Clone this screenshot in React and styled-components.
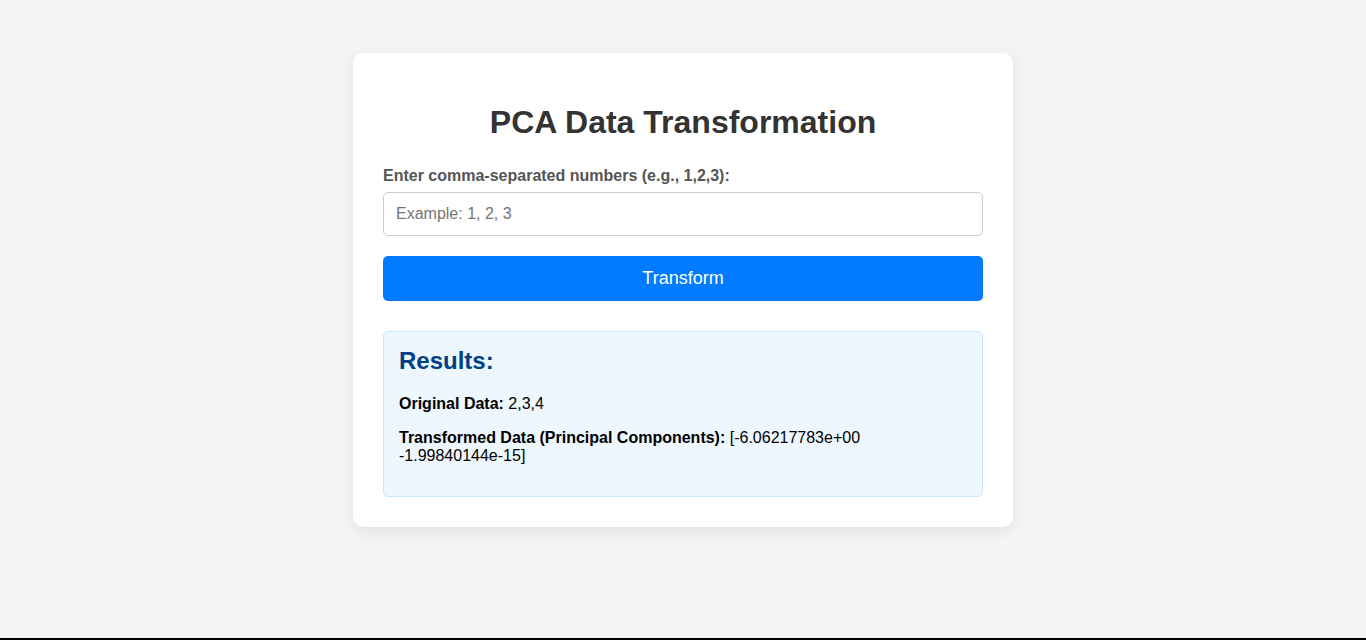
import React from 'react';
import styled, { createGlobalStyle } from 'styled-components';

const GlobalStyle = createGlobalStyle`
  body {
    margin: 0;
    font-family: "Liberation Sans", Arial, sans-serif;
    background: #f3f4f6;
  }
`;

const Page = styled.div`
  min-height: 640px;
  box-sizing: border-box;
  border-bottom: 2px solid #000;
  display: flex;
  justify-content: center;
  align-items: flex-start;
  padding-top: 53px;
`;

const Card = styled.div`
  width: 600px;
  padding: 30px;
  background: #fff;
  border-radius: 10px;
  box-shadow: 0 4px 14px rgba(0, 0, 0, 0.08);
`;

const Title = styled.h1`
  margin: 21px 0 26px;
  font-size: 32px;
  font-weight: bold;
  color: #333;
  text-align: center;
`;

const Label = styled.label`
  display: block;
  margin-bottom: 7px;
  font-size: 16px;
  font-weight: bold;
  color: #555;
`;

const Input = styled.input`
  display: block;
  width: 100%;
  box-sizing: border-box;
  padding: 12px;
  font-family: inherit;
  font-size: 16px;
  border: 1px solid #ccc;
  border-radius: 5px;
  outline: none;

  &::placeholder {
    color: #757575;
  }
`;

const Button = styled.button`
  display: block;
  width: 100%;
  margin-top: 20px;
  padding: 12px;
  font-family: inherit;
  font-size: 18px;
  color: #fff;
  background: #007bff;
  border: none;
  border-radius: 5px;
  cursor: pointer;
`;

const Results = styled.div`
  margin-top: 30px;
  padding: 15px;
  background: #eff7fe;
  border: 1px solid #cce5ff;
  border-radius: 5px;
`;

const ResultsTitle = styled.h2`
  margin: 0 0 20px;
  font-size: 24px;
  font-weight: bold;
  color: #004085;
`;

const Line = styled.p`
  margin: 16px 0;
  font-size: 16px;
  color: #000;
`;

const App = () => (
  <>
    <GlobalStyle />
    <Page>
      <Card>
        <Title>PCA Data Transformation</Title>
        <Label htmlFor="data">Enter comma-separated numbers (e.g., 1,2,3):</Label>
        <Input id="data" type="text" placeholder="Example: 1, 2, 3" />
        <Button>Transform</Button>
        <Results>
          <ResultsTitle>Results:</ResultsTitle>
          <Line>
            <strong>Original Data:</strong> 2,3,4
          </Line>
          <Line>
            <strong>Transformed Data (Principal Components):</strong> [-6.06217783e+00
            <br />
            -1.99840144e-15]
          </Line>
        </Results>
      </Card>
    </Page>
  </>
);

export default App;
